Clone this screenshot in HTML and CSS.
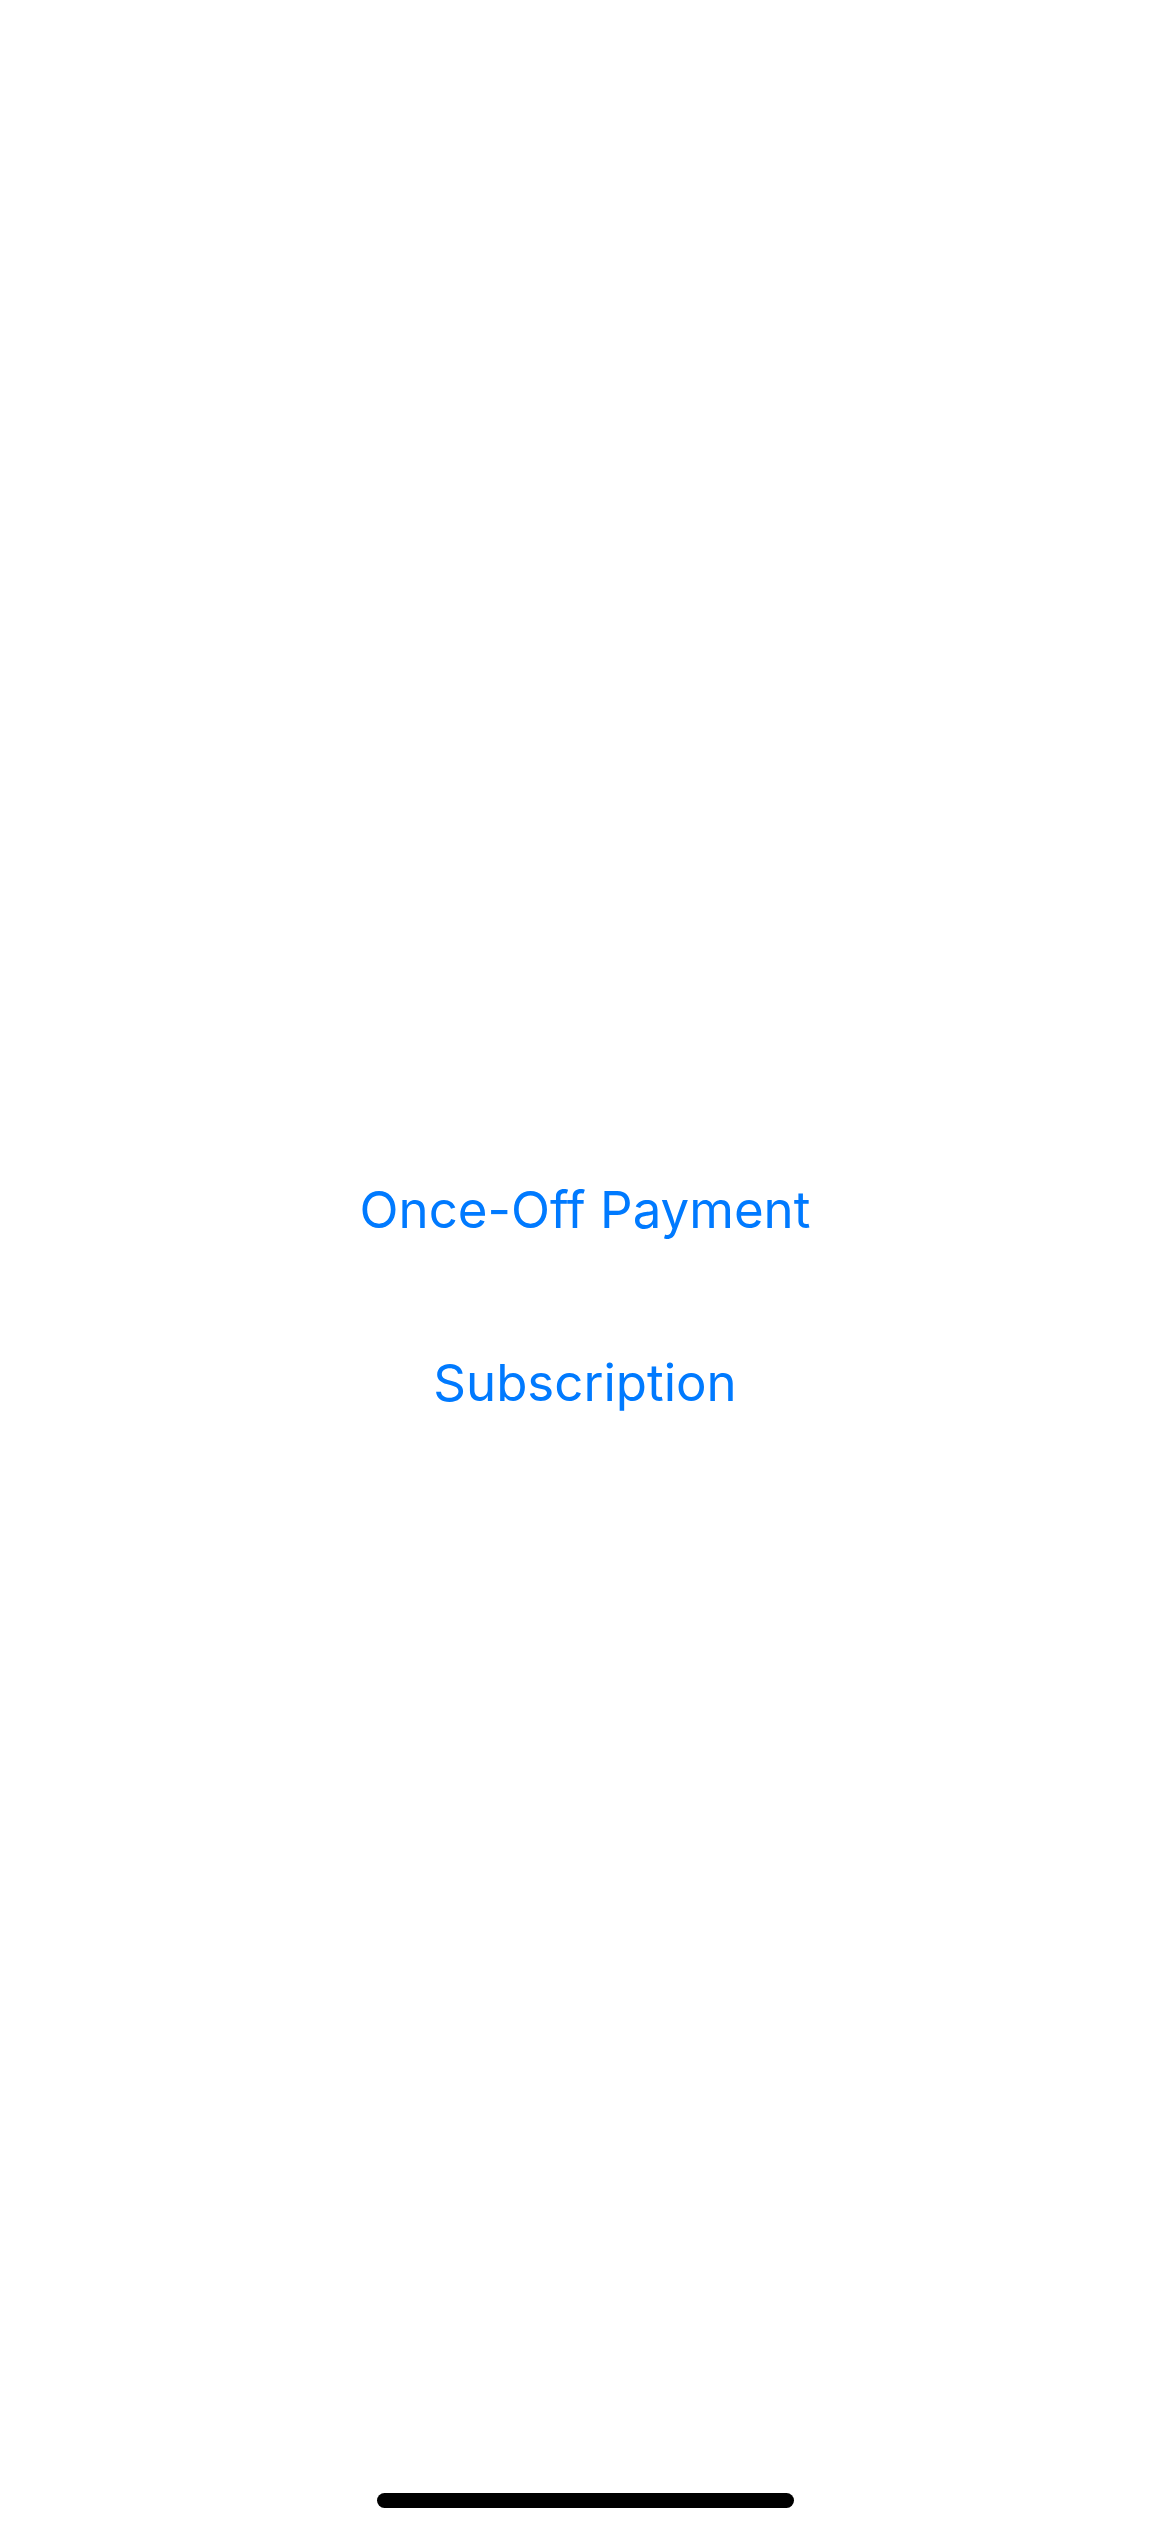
FILE: index.html
```
<!DOCTYPE html>
<html lang="en">
<head>
<meta charset="utf-8">
<meta name="viewport" content="width=device-width, initial-scale=1">
<title>Payment</title>
<link rel="stylesheet" href="styles.css">
</head>
<body>
<main class="options">
<button class="option" type="button">Once-Off Payment</button>
<button class="option" type="button">Subscription</button>
</main>
<footer class="home-area"><div class="home-indicator"></div></footer>
</body>
</html>
```
FILE: styles.css
```
body {
  margin: 0;
  min-height: 100vh;
  display: flex;
  flex-direction: column;
  background: #fff;
  font-family: Inter, "Liberation Sans", sans-serif;
}

.options {
  flex: 1;
  display: flex;
  flex-direction: column;
  align-items: center;
  justify-content: center;
  gap: 109px;
  padding-top: 163px;
}

.option {
  padding: 0;
  border: 0;
  background: none;
  color: #007aff;
  font: inherit;
  font-size: 51px;
  line-height: 64px;
  cursor: pointer;
}

.home-area {
  display: flex;
  justify-content: center;
  padding: 63px 0 24px;
}

.home-indicator {
  width: 417px;
  max-width: 60%;
  height: 15px;
  border-radius: 8px;
  background: #000;
}
```
